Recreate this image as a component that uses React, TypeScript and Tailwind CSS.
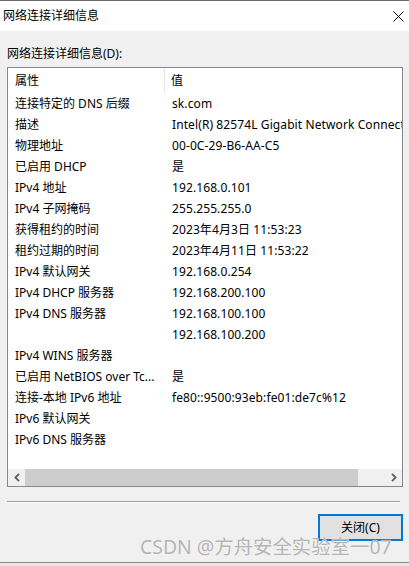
import React from 'react';

const rows: [string, string][] = [
  ['连接特定的 DNS 后缀', 'sk.com'],
  ['描述', 'Intel(R) 82574L Gigabit Network Connection'],
  ['物理地址', '00-0C-29-B6-AA-C5'],
  ['已启用 DHCP', '是'],
  ['IPv4 地址', '192.168.0.101'],
  ['IPv4 子网掩码', '255.255.255.0'],
  ['获得租约的时间', '2023年4月3日 11:53:23'],
  ['租约过期的时间', '2023年4月11日 11:53:22'],
  ['IPv4 默认网关', '192.168.0.254'],
  ['IPv4 DHCP 服务器', '192.168.200.100'],
  ['IPv4 DNS 服务器', '192.168.100.100'],
  ['', '192.168.100.200'],
  ['IPv4 WINS 服务器', ''],
  ['已启用 NetBIOS over Tc...', '是'],
  ['连接-本地 IPv6 地址', 'fe80::9500:93eb:fe01:de7c%12'],
  ['IPv6 默认网关', ''],
  ['IPv6 DNS 服务器', ''],
];

const Chevron = ({ dir }: { dir: 'left' | 'right' }) => (
  <svg width="6" height="9" viewBox="0 0 6 9" className="text-[#606060]">
    <path
      d={dir === 'left' ? 'M5 0.8 L1.4 4.5 L5 8.2' : 'M1 0.8 L4.6 4.5 L1 8.2'}
      fill="none"
      stroke="currentColor"
      strokeWidth="1.8"
    />
  </svg>
);

export default function App() {
  return (
    <div
      className="relative w-[409px] h-[566px] flex flex-col overflow-hidden text-[12px] text-black bg-[#f0f0f0]"
      style={{ fontFamily: '"Noto Sans", "Noto Sans CJK SC", sans-serif' }}
    >
      {/* Title bar */}
      <div className="h-[31px] shrink-0 bg-white border-t border-[#6b6b6b] flex items-center justify-between pl-[3px] pr-[5px]">
        <span className="leading-4">网络连接详细信息</span>
        <svg width="11" height="11" viewBox="0 0 11 11">
          <path d="M0.5 0.5 L10.5 10.5 M10.5 0.5 L0.5 10.5" stroke="#111" strokeWidth="1" />
        </svg>
      </div>

      {/* Body */}
      <div className="flex-1 flex flex-col px-[7px] pt-[15px]">
        <div className="leading-4 h-4">网络连接详细信息(D):</div>

        <div className="mt-[5px] w-[396px] h-[420px] border border-[#828790] bg-white flex flex-col">
          <div className="flex-1 overflow-hidden">
            <div className="flex h-[25px] items-center">
              <div className="w-[157px] pl-[7px] h-full flex items-center border-r border-[#e5e5e5]">属性</div>
              <div className="pl-[6px]">值</div>
            </div>
            {rows.map(([k, v], i) => (
              <div key={i} className="flex h-[21px] items-center whitespace-nowrap">
                <div className="w-[157px] shrink-0 pl-[7px]">{k}</div>
                <div className="pl-[7px] tracking-[0.1px]">{v}</div>
              </div>
            ))}
          </div>
          {/* Horizontal scrollbar */}
          <div className="h-[17px] shrink-0 bg-[#f0f0f0] flex items-center">
            <div className="w-[17px] h-full flex items-center justify-center">
              <Chevron dir="left" />
            </div>
            <div className="flex-1 h-full flex">
              <div className="w-[333px] h-full bg-[#cdcdcd]" />
            </div>
            <div className="w-[17px] h-full flex items-center justify-center">
              <Chevron dir="right" />
            </div>
          </div>
        </div>

        {/* Separator */}
        <div className="mt-[14px] w-[393px] border-t border-[#a0a0a0] border-b border-b-white" />

        {/* Buttons */}
        <div className="mt-[11px] flex justify-end">
          <button className="w-[85px] h-[27px] mr-[-1px] bg-[#e1e1e1] border-2 border-[#0078d7] leading-4">
            关闭(C)
          </button>
        </div>
      </div>

      <div className="h-[4px] shrink-0 border-t border-[#8a8a8a] bg-[#e8e8e8]" />

      {/* Watermark */}
      <div
        className="absolute left-[140px] top-[535px] text-[19.4px] leading-6 text-[#b4b4b4] whitespace-nowrap pointer-events-none"
        style={{ textShadow: '0 0 1px #ffffff' }}
      >
        CSDN @方舟安全实验室一07
      </div>
    </div>
  );
}
